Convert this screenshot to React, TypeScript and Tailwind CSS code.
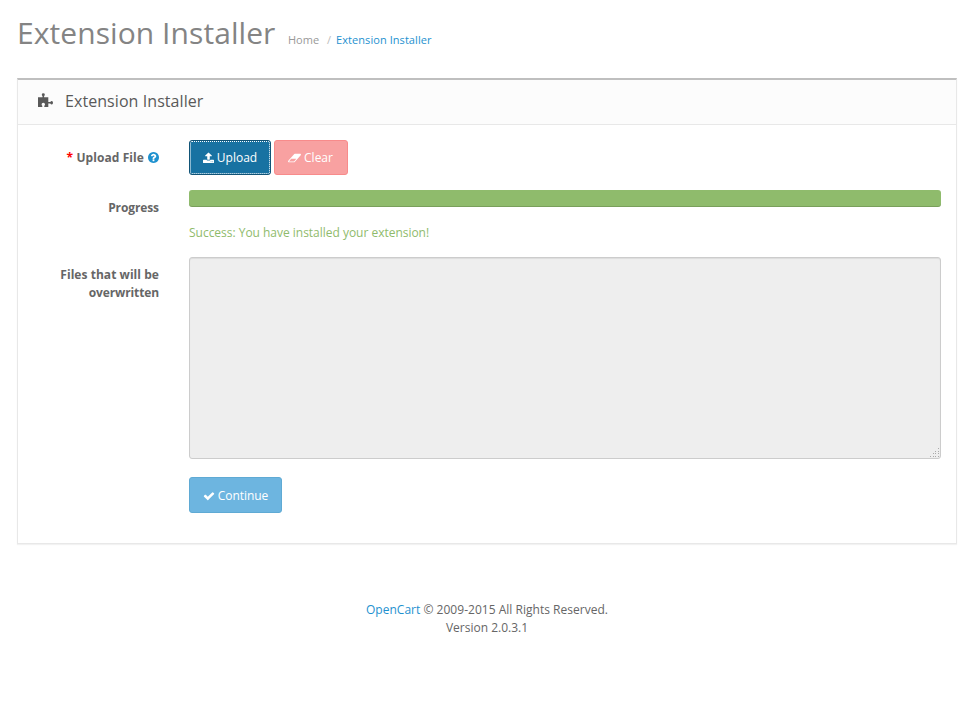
import React from "react";

const icons = {
  check: { box: "0 0 1792 1792", d: "M1671 566q0 40-28 68l-724 724-136 136q-28 28-68 28t-68-28l-136-136-362-362q-28-28-28-68t28-68l136-136q28-28 68-28t68 28l294 295 656-657q28-28 68-28t68 28l136 136q28 28 28 68z" },
  upload: { box: "64 0 1664 1792", d: "M1344 1472q0-26-19-45t-45-19-45 19-19 45 19 45 45 19 45-19 19-45zm256 0q0-26-19-45t-45-19-45 19-19 45 19 45 45 19 45-19 19-45zm128-224v320q0 40-28 68t-68 28h-1472q-40 0-68-28t-28-68v-320q0-40 28-68t68-28h427q21 56 70.5 92t110.5 36h256q61 0 110.5-36t70.5-92h427q40 0 68 28t28 68zm-325-648q-17 40-59 40h-256v448q0 26-19 45t-45 19h-256q-26 0-45-19t-19-45v-448h-256q-42 0-59-40-17-39 14-69l448-448q18-19 45-19t45 19l448 448q31 30 14 69z" },
  question: { box: "128 128 1536 1536", d: "M1024 1376v-192q0-14-9-23t-23-9h-192q-14 0-23 9t-9 23v192q0 14 9 23t23 9h192q14 0 23-9t9-23zm256-672q0-88-55.5-163t-138.5-116-170-41q-243 0-371 213-15 24 8 42l132 100q7 6 19 6 16 0 25-12 53-68 86-92 34-24 86-24 48 0 85.5 26t37.5 59q0 38-20 61t-68 45q-63 28-115.5 86.5t-52.5 125.5v36q0 14 9 23t23 9h192q14 0 23-9t9-23q0-19 21.5-49.5t54.5-49.5q32-18 49-28.5t46-35 44.5-48 28-60.5 12.5-81zm384 192q0 209-103 385.5t-279.5 279.5-385.5 103-385.5-103-279.5-279.5-103-385.5 103-385.5 279.5-279.5 385.5-103 385.5 103 279.5 279.5 103 385.5z" },
  eraser: { box: "64 0 1920 1792", d: "M960 1408l336-384h-768l-336 384h768zm1013-1077q15 34 9.5 71.5t-30.5 65.5l-896 1024q-38 44-96 44h-768q-38 0-69.5-20.5t-47.5-54.5q-15-34-9.5-71.5t30.5-65.5l896-1024q38-44 96-44h768q38 0 69.5 20.5t47.5 54.5z" },
  puzzle: { box: "0 0 15 14", d: "M0 4.2H4.5V3Q3.8 2.5 3.8 1.5Q3.8 .2 5.3 .2T6.8 1.5Q6.8 2.5 6.1 3V4.2H10.3V9H12.3Q12.8 8 13.8 8Q15 8 15 9.8T13.8 11.6Q12.8 11.6 12.3 10.6H10.3V14H6.3V12.8Q7 12.2 7 11.2Q7 9.7 5.3 9.7T3.6 11.2Q3.6 12.2 4.3 12.8V14H0z" },
};

function Icon({ name, className }: { name: keyof typeof icons; className: string }) {
  return (
    <svg viewBox={icons[name].box} fill="currentColor" className={`shrink-0 ${className}`} aria-hidden="true">
      <path d={icons[name].d} />
    </svg>
  );
}

export default function App() {
  return (
    <div className="h-[713px] w-[960px] overflow-hidden bg-white font-['Open_Sans',sans-serif] text-[12px] leading-[18px] text-[#666]">
      <header className="flex h-[78px] items-start pl-[17px] pt-[16px]">
        <h1 className="w-[258px] whitespace-nowrap text-[30px] leading-[34px] tracking-[0.07px] text-[#848484]">Extension Installer</h1>
        <nav className="ml-[13px] mt-[15px] flex whitespace-nowrap text-[11px] text-[#999]">
          <span>Home</span>
          <span className="w-[17px] pl-[8px] text-[#bbb]">/</span>
          <span className="tracking-[0.06px] text-[#1e91cf]">Extension Installer</span>
        </nav>
      </header>
      <section className="ml-[17px] h-[466px] w-[940px] border border-t-2 border-[#e8e8e8] border-t-[#bfbfbf] shadow-[0_1px_1px_rgba(0,0,0,0.05)]">
        <div className="flex h-[45px] items-center border-b border-[#e8e8e8] bg-[#fcfcfc] pb-[2px] pl-[20px] text-[#595959]">
          <Icon name="puzzle" className="mb-[2px] h-[14px] w-[15px]" />
          <h3 className="ml-[12px] text-[16px] tracking-[0.07px]">Extension Installer</h3>
        </div>
        <div className="grid grid-cols-[141px_752px] gap-x-[30px] pt-[15px]">
          <div className="flex h-[50px] items-start justify-end gap-[4px] pt-[9px] font-bold">
            <span className="tracking-[0.08px]"><span className="text-[#f00]">*</span> Upload File</span>
            <Icon name="question" className="mt-[3px] h-[11px] w-[11px] text-[#1e91cf]" />
          </div>
          <div className="flex gap-[3px] text-white">
            <button className="flex h-[35px] w-[82px] items-center justify-center gap-[3px] rounded-[3px] border border-[#115376] bg-[#1872a2] outline-1 -outline-offset-2 outline-dotted outline-white">
              <Icon name="upload" className="h-[12px] w-[11px]" />Upload
            </button>
            <button className="flex h-[35px] w-[74px] items-center justify-center gap-[3px] rounded-[3px] border border-[#f88b8b] bg-[#f8a1a1] pr-[1px]">
              <Icon name="eraser" className="h-[12px] w-[13px]" />Clear
            </button>
          </div>
          <div className="h-[67px] pt-[9px] text-right font-bold tracking-[-0.1px]">Progress</div>
          <div>
            <div className="h-[17px] rounded-[3px] bg-[#8fbb6c] shadow-[inset_0_-1px_0_rgba(0,0,0,0.15)]" />
            <p className="mt-[17px] tracking-[-0.02px] text-[#8fbb6c]">Success: You have installed your extension!</p>
          </div>
          <div className="pt-[9px] text-right font-bold"><span className="tracking-[0.05px]">Files that will be</span> <span className="tracking-[-0.12px]">overwritten</span></div>
          <div className="relative h-[202px]">
            <textarea className="block h-full w-full resize-none rounded-[3px] border border-[#ccc] bg-[#eee] shadow-[inset_0_1px_1px_rgba(0,0,0,0.075)]" disabled />
            <svg className="absolute bottom-[1px] right-[1px] h-[10px] w-[10px]" viewBox="0 0 10 10" fill="#aaa" shapeRendering="crispEdges">
              <path d="M8 0h1v1h-1zM5 3h1v1h-1zM8 3h1v1h-1zM3 5h1v1h-1zM5 5h1v1h-1zM8 5h1v1h-1zM0 8h1v1h-1zM3 8h1v1h-1zM5 8h1v1h-1zM8 8h1v1h-1z" />
            </svg>
          </div>
        </div>
        <button className="ml-[171px] mt-[18px] flex h-[36px] w-[93px] items-center justify-center gap-[3px] rounded-[3px] border border-[#5faad4] bg-[#6db5e0] pt-[1px] text-white">
          <Icon name="check" className="h-[12px] w-[12px]" /><span className="tracking-[-0.05px]">Continue</span>
        </button>
      </section>
      <footer className="ml-[17px] mt-[57px] w-[940px] text-center"><span className="tracking-[0.02px]"><a className="text-[#1e91cf]">OpenCart</a> © 2009-2015 All Rights Reserved.</span><br />Version 2.0.3.1</footer>
    </div>
  );
}
